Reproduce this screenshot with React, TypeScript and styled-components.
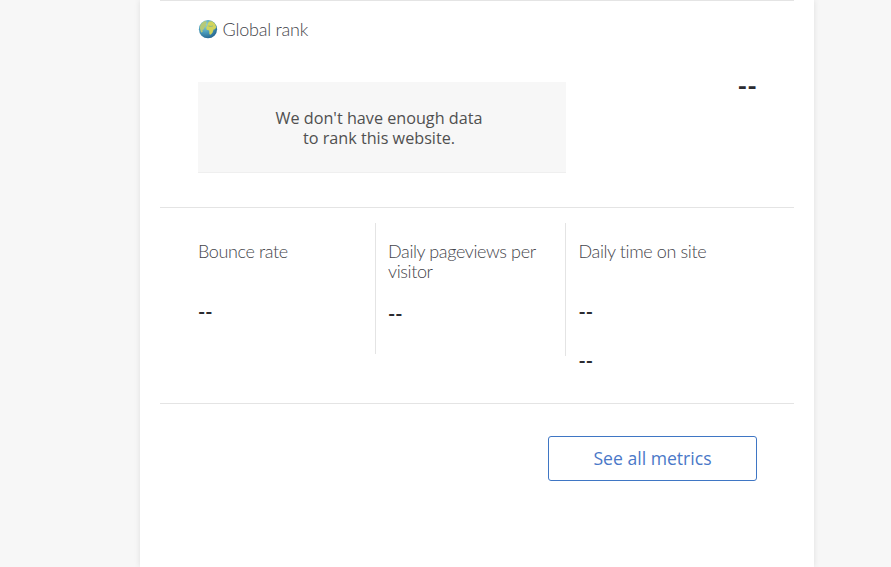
import React from "react";
import styled, { createGlobalStyle } from "styled-components";

const GlobalStyle = createGlobalStyle`
  * { box-sizing: border-box; }
  body { margin: 0; background: #f7f7f7; overflow: hidden; }
`;

const Page = styled.div`
  height: 567px;
  padding: 0 77px 0 140px;
  background: #f7f7f7;
  font-family: Lato, sans-serif;
  color: #2b2b30;
`;

const Card = styled.main`
  height: 100%;
  padding: 0 20px;
  background: #fff;
  box-shadow: 0 0 6px rgba(0, 0, 0, 0.1);
`;

const RankSection = styled.section`
  height: 208px;
  padding: 18px 38px 0;
  border-top: 1px solid #e4e4e4;
  border-bottom: 1px solid #e4e4e4;
`;

const Label = styled.h2<{ $spacing?: number }>`
  display: flex;
  align-items: center;
  gap: 4.5px;
  margin: 0;
  color: #45454b;
  font-size: 18px;
  font-weight: 300;
  line-height: 20px;
  letter-spacing: ${(p) => p.$spacing ?? -0.38}px;
`;

const RankRow = styled.div`
  display: flex;
  justify-content: space-between;
  margin-top: 43px;
`;

const Notice = styled.div`
  width: 368px;
  height: 91px;
  padding: 26px 6px 0 0;
  background: #f7f7f7;
  border-bottom: 1px solid #efefef;
  color: #505050;
  font: 400 16.2px/20px "Open Sans", sans-serif;
  text-align: center;
`;

const RankValue = styled.div`
  margin-right: -1px;
  font-size: 26px;
  font-weight: 700;
  line-height: 8px;
`;

const Metrics = styled.section`
  display: grid;
  grid-template-columns: 216px 190px 1fr;
  align-items: start;
  height: 196px;
  padding-top: 15px;
  border-bottom: 1px solid #e4e4e4;
`;

const Metric = styled.div<{ $height: number; $indent: number; $divider?: boolean }>`
  height: ${(p) => p.$height}px;
  padding: 18px 20px 0 ${(p) => p.$indent}px;
  border-right: ${(p) => (p.$divider ? "1px solid #e4e4e4" : "0")};
`;

const Value = styled.div<{ $gap: number }>`
  margin-top: ${(p) => p.$gap}px;
  font-size: 19.5px;
  font-weight: 700;
  line-height: 20px;
`;

const Actions = styled.div`
  display: flex;
  justify-content: flex-end;
  padding: 32px 37px 0 0;
`;

const Button = styled.button`
  width: 209px;
  height: 45px;
  padding: 0 0 2px;
  border: 1px solid #3f76c4;
  border-radius: 3px;
  background: #fff;
  color: #4a78c8;
  font: 400 17.6px/24px "Open Sans", sans-serif;
`;

const Globe = () => (
  <svg width="20" height="20" viewBox="0 0 20 20" aria-hidden="true">
    <defs>
      <radialGradient id="ocean" cx="35%" cy="25%" r="80%">
        <stop offset="0" stopColor="#9bd5cf" />
        <stop offset="0.5" stopColor="#4d9fbd" />
        <stop offset="1" stopColor="#24648f" />
      </radialGradient>
    </defs>
    <circle cx="10" cy="10.2" r="9.1" fill="url(#ocean)" />
    <path d="M1.9 9C2 5.5 4.3 3 7.3 2.1l1.5 1.2-1.1 2 .6 1.8-1.9 1.4-.5 1.7-1.4.7.2 2.2-1.6.3z" fill="#b5c978" />
    <path d="M9.5 5.3l1.4-2.8 3.1-.2 3 2.4 1.3 3.6-1.3 2-1.4.2-1.1 3.2-1.8 2.1-1.3-.5-.2-3.8-2.5-.8-.6-2.2 1.2-1.6z" fill="#d1d45c" />
    <path d="M10.5 6.5l2.5.5 1.8-.4.3.7-2.1.5-2.6-.4z" fill="#82b68c" />
  </svg>
);

export default function App() {
  return (
    <>
      <GlobalStyle />
      <Page>
        <Card>
          <RankSection>
            <Label $spacing={-0.22}><Globe />Global rank</Label>
            <RankRow>
              <Notice>We don't have enough data<br />to rank this website.</Notice>
              <RankValue>--</RankValue>
            </RankRow>
          </RankSection>
          <Metrics>
            <Metric $height={131} $indent={38} $divider>
              <Label>Bounce rate</Label>
              <Value $gap={41}>--</Value>
            </Metric>
            <Metric $height={133} $indent={12} $divider>
              <Label>Daily pageviews per visitor</Label>
              <Value $gap={23}>--</Value>
            </Metric>
            <Metric $height={160} $indent={12.5}>
              <Label>Daily time on site</Label>
              <Value $gap={41}>--</Value>
              <Value $gap={29}>--</Value>
            </Metric>
          </Metrics>
          <Actions><Button>See all metrics</Button></Actions>
        </Card>
      </Page>
    </>
  );
}
